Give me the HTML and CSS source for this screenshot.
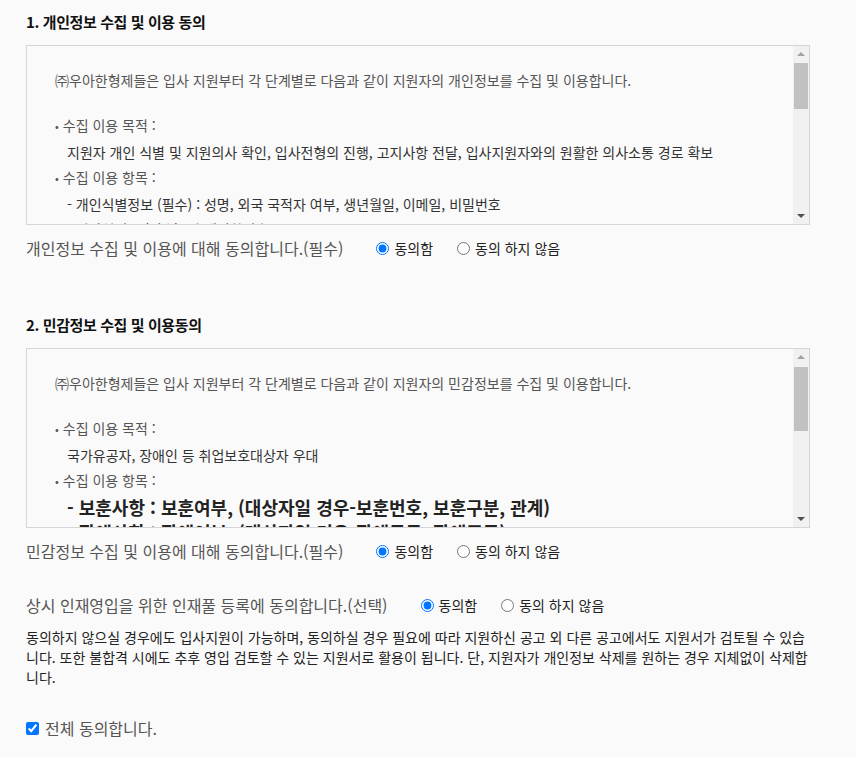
FILE: index.html
```html
<!DOCTYPE html>
<html lang="ko">
<head>
  <meta charset="UTF-8">
  <meta name="viewport" content="width=device-width, initial-scale=1">
  <title>개인정보 수집 및 이용 동의</title>
  <link rel="stylesheet" href="styles.css">
</head>
<body>
  <div class="agree-wrap">
    <h3 class="agree-title">1. 개인정보 수집 및 이용 동의</h3>
    <div class="terms-box">
      <div class="terms-body">
        <p class="terms-lead">㈜우아한형제들은 입사 지원부터 각 단계별로 다음과 같이 지원자의 개인정보를 수집 및 이용합니다.</p>
        <ul class="terms-list">
          <li>수집 이용 목적 :</li>
          <li class="sub">지원자 개인 식별 및 지원의사 확인, 입사전형의 진행, 고지사항 전달, 입사지원자와의 원활한 의사소통 경로 확보</li>
          <li>수집 이용 항목 :</li>
          <li class="sub">- 개인식별정보 (필수) : 성명, 외국 국적자 여부, 생년월일, 이메일, 비밀번호</li>
          <li class="sub">- 연락처정보 (필수) : 휴대전화번호, 주소</li>
          <li class="sub">- 학력사항 (선택) : 학교명, 전공, 입학 및 졸업년월, 학점</li>
        </ul>
      </div>
      <div class="scrollbar">
        <span class="sb-btn up"></span>
        <span class="sb-track"><span class="sb-thumb"></span></span>
        <span class="sb-btn down"></span>
      </div>
    </div>
    <div class="agree-row">
      <span class="agree-label">개인정보 수집 및 이용에 대해 동의합니다.(필수)</span>
      <label class="radio"><input type="radio" name="agree1" checked> 동의함</label>
      <label class="radio"><input type="radio" name="agree1"> 동의 하지 않음</label>
    </div>

    <h3 class="agree-title second">2. 민감정보 수집 및 이용동의</h3>
    <div class="terms-box">
      <div class="terms-body">
        <p class="terms-lead">㈜우아한형제들은 입사 지원부터 각 단계별로 다음과 같이 지원자의 민감정보를 수집 및 이용합니다.</p>
        <ul class="terms-list">
          <li>수집 이용 목적 :</li>
          <li class="sub">국가유공자, 장애인 등 취업보호대상자 우대</li>
          <li>수집 이용 항목 :</li>
          <li class="sub big">- 보훈사항 : 보훈여부, (대상자일 경우-보훈번호, 보훈구분, 관계)</li>
          <li class="sub big">- 장애사항 : 장애여부, (대상자일 경우-장애등급, 장애종류)</li>
        </ul>
      </div>
      <div class="scrollbar">
        <span class="sb-btn up"></span>
        <span class="sb-track"><span class="sb-thumb tall"></span></span>
        <span class="sb-btn down"></span>
      </div>
    </div>
    <div class="agree-row">
      <span class="agree-label">민감정보 수집 및 이용에 대해 동의합니다.(필수)</span>
      <label class="radio"><input type="radio" name="agree2" checked> 동의함</label>
      <label class="radio"><input type="radio" name="agree2"> 동의 하지 않음</label>
    </div>

    <div class="agree-row pool">
      <span class="agree-label">상시 인재영입을 위한 인재풀 등록에 동의합니다.(선택)</span>
      <label class="radio"><input type="radio" name="agree3" checked> 동의함</label>
      <label class="radio"><input type="radio" name="agree3"> 동의 하지 않음</label>
    </div>
    <p class="pool-note">동의하지 않으실 경우에도 입사지원이 가능하며, 동의하실 경우 필요에 따라 지원하신 공고 외 다른 공고에서도 지원서가 검토될 수 있습니다. 또한 불합격 시에도 추후 영입 검토할 수 있는 지원서로 활용이 됩니다. 단, 지원자가 개인정보 삭제를 원하는 경우 지체없이 삭제합니다.</p>

    <label class="all-agree"><input type="checkbox" checked> 전체 동의합니다.</label>
  </div>
</body>
</html>
```

FILE: styles.css
```css
body { margin: 0; background: #fafafa; font-family: "Noto Sans CJK KR", "Noto Sans", sans-serif; color: #333; }
.agree-wrap { width: 784px; padding: 11px 26px 20px; }
.agree-title { margin: 0 0 12px; font-size: 15px; font-weight: bold; letter-spacing: -0.4px; line-height: 22px; color: #111; }
.agree-title.second { margin-top: 54px; }

.terms-box { display: flex; height: 180px; border: 1px solid #d5d5d5; background: #fafafa; box-sizing: border-box; }
.terms-body { flex: 1; overflow: hidden; padding: 21px 28px 0; font-size: 14px; color: #555; }
.scrollbar { display: flex; flex-direction: column; width: 16px; background: #f1f1f1; }
.sb-btn { display: flex; align-items: center; justify-content: center; height: 16px; }
.sb-btn::before { content: ""; border-left: 4px solid transparent; border-right: 4px solid transparent; }
.sb-btn.up::before { border-bottom: 4px solid #a3a3a3; }
.sb-btn.down::before { border-top: 4px solid #505050; }
.sb-track { flex: 1; padding: 0 1px; }
.sb-thumb { display: block; height: 46px; margin-top: 1px; background: #c1c1c1; }
.sb-thumb.tall { height: 64px; margin-top: 2px; }

.terms-lead { margin: 0 0 20px; line-height: 26px; }
.terms-list { margin: 0; padding: 0; list-style: none; line-height: 25.5px; }
.terms-list li { white-space: nowrap; }
.terms-list li::before { content: "•"; margin-right: 4px; font-size: 11px; }
.terms-list li.sub { padding-left: 12px; color: #333; }
.terms-list li.sub::before { content: none; }
.terms-list li.big { font-size: 18px; font-weight: bold; color: #222; }

.agree-row { display: flex; align-items: center; height: 24px; margin-top: 11px; }
.agree-row.pool { margin-top: 30px; }
.agree-label { font-size: 16px; color: #555; margin-right: 28px; }
.radio { display: flex; align-items: center; font-size: 14px; color: #222; margin-right: 19px; }
.radio input { margin: 0 5px 0 5px; }
.pool-note { margin: 10px 0 0; font-size: 14px; line-height: 20px; color: #222; }
.all-agree { display: flex; align-items: center; margin-top: 29px; font-size: 16px; color: #555; }
.all-agree input { margin: 0 6px 0 0; width: 13px; height: 13px; }
```
